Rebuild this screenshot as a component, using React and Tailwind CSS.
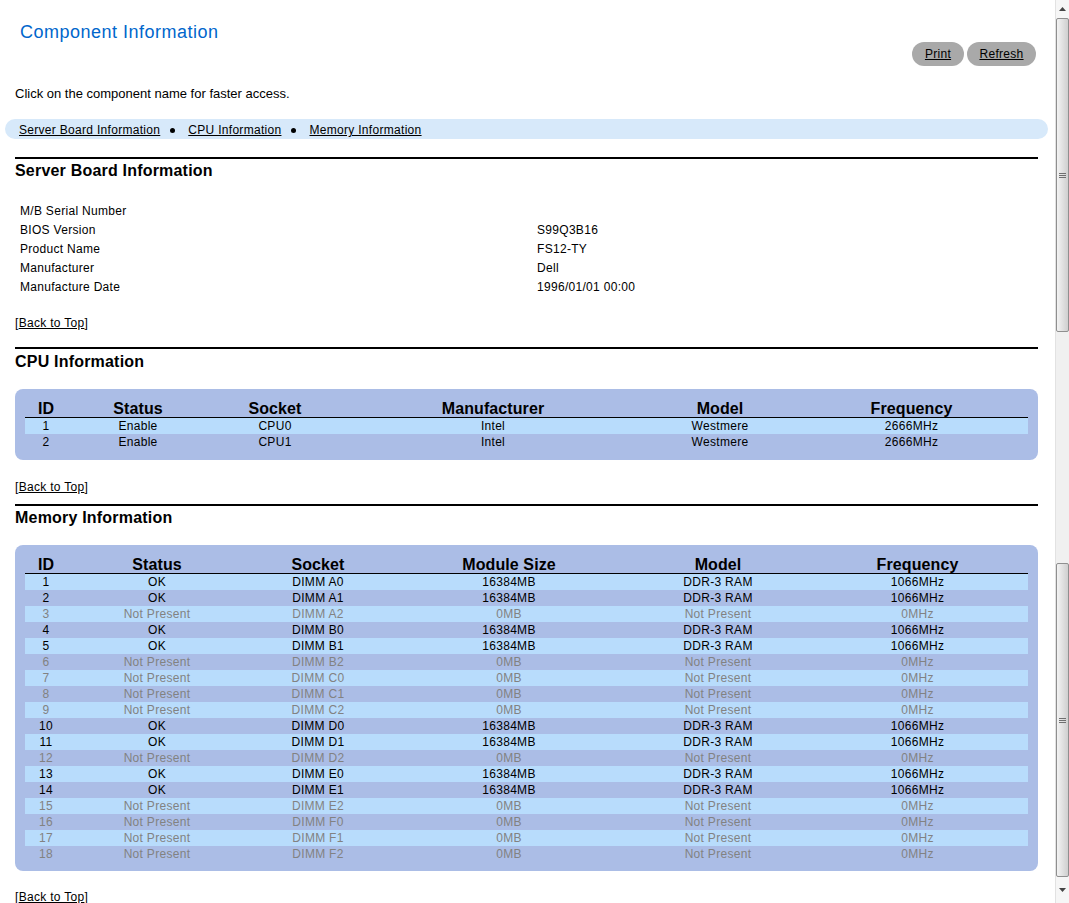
import React from 'react';

const boardInfo = [
  ['M/B Serial Number', ''],
  ['BIOS Version', 'S99Q3B16'],
  ['Product Name', 'FS12-TY'],
  ['Manufacturer', 'Dell'],
  ['Manufacture Date', '1996/01/01 00:00'],
];

const cpus = [
  { id: 1, status: 'Enable', socket: 'CPU0', maker: 'Intel', model: 'Westmere', freq: '2666MHz' },
  { id: 2, status: 'Enable', socket: 'CPU1', maker: 'Intel', model: 'Westmere', freq: '2666MHz' },
];

const slots = ['A0', 'A1', 'A2', 'B0', 'B1', 'B2', 'C0', 'C1', 'C2', 'D0', 'D1', 'D2', 'E0', 'E1', 'E2', 'F0', 'F1', 'F2'];
const populated = ['A0', 'A1', 'B0', 'B1', 'D0', 'D1', 'E0', 'E1'];

const dimms = slots.map((slot, i) => {
  const ok = populated.includes(slot);
  return {
    id: i + 1,
    ok,
    status: ok ? 'OK' : 'Not Present',
    socket: 'DIMM ' + slot,
    size: ok ? '16384MB' : '0MB',
    model: ok ? 'DDR-3 RAM' : 'Not Present',
    freq: ok ? '1066MHz' : '0MHz',
  };
});

function BackToTop({ className }) {
  return (
    <div className={'text-[12px] leading-[14px] tracking-[0.3px] ' + className}>
      [<a href="#top" className="underline text-black">Back to Top</a>]
    </div>
  );
}

function SectionTitle({ children, className, gap }) {
  return (
    <>
      <div className={'h-[2px] bg-black ' + className}></div>
      <h2 className={'text-[16px] leading-[18px] font-bold tracking-[0.2px] text-black ' + gap}>{children}</h2>
    </>
  );
}

function ThumbGrip() {
  return (
    <div className="flex flex-col gap-[1px]">
      <div className="w-[7px] h-[1px] bg-[#6f6f6f]"></div>
      <div className="w-[7px] h-[1px] bg-[#6f6f6f]"></div>
      <div className="w-[7px] h-[1px] bg-[#6f6f6f]"></div>
    </div>
  );
}

function Scrollbar() {
  return (
    <div className="w-[14px] h-full flex flex-col bg-[#f0f0f0] border-l border-[#e2e2e2]">
      <div className="h-[18px] flex items-center justify-center bg-[#f6f6f6]">
        <svg width="7" height="4" viewBox="0 0 7 4"><path d="M3.5 0L7 4H0z" fill="#444" /></svg>
      </div>
      <div className="h-[314px] rounded-[2px] border border-[#8f8f8f] bg-gradient-to-r from-[#f3f3f3] to-[#cfcfcf] flex items-center justify-center">
        <ThumbGrip />
      </div>
      <div className="h-[231px]"></div>
      <div className="h-[314px] rounded-[2px] border border-[#8f8f8f] bg-gradient-to-r from-[#f3f3f3] to-[#cfcfcf] flex items-center justify-center">
        <ThumbGrip />
      </div>
      <div className="flex-1 flex items-center justify-center bg-[#f6f6f6]">
        <svg width="7" height="4" viewBox="0 0 7 4"><path d="M0 0H7L3.5 4z" fill="#444" /></svg>
      </div>
    </div>
  );
}

function HeaderRow({ cols, labels }) {
  return (
    <div className={'grid border-b border-black text-[16px] leading-[18px] font-bold tracking-[0.1px] text-black text-center ' + cols}>
      {labels.map(l => (
        <div key={l} className="h-[18px] pt-[1px] whitespace-nowrap">{l}</div>
      ))}
    </div>
  );
}

function Bullet() {
  return <span className="ml-[10px] mr-[13px] w-[5px] h-[5px] rounded-full bg-black"></span>;
}

export default function App() {
  const cpuCols = 'grid-cols-[42px_142px_132px_304px_150px_233px]';
  const memCols = 'grid-cols-[42px_180px_142px_240px_178px_221px]';

  return (
    <div id="top" className="h-[903px] w-full flex overflow-hidden bg-white font-['Liberation_Sans',Arial,sans-serif] text-black">
      <main className="flex-1 overflow-hidden pl-[15px] pr-[17px]">
        <h1 className="pt-[22px] pl-[5px] text-[18px] leading-[21px] tracking-[0.5px] text-[#0066cc]">Component Information</h1>

        <div className="-mt-[1px] flex justify-end gap-[3px] pr-[2px]">
          <button className="w-[52px] h-[24px] rounded-full bg-[#a9a9a9] text-[12px] tracking-[0.3px] underline text-black">Print</button>
          <button className="w-[69px] h-[24px] rounded-full bg-[#a9a9a9] text-[12px] tracking-[0.3px] underline text-black">Refresh</button>
        </div>

        <p className="mt-[20px] text-[13px] leading-[15px]">Click on the component name for faster access.</p>

        <nav className="mt-[18px] -mx-[10px] h-[20px] rounded-full bg-[#d7e9fa] pl-[14px] pt-[2px] flex items-center text-[12px] tracking-[0.3px]">
          <a href="#board" className="underline">Server Board Information</a>
          <Bullet />
          <a href="#cpu" className="underline">CPU Information</a>
          <Bullet />
          <a href="#memory" className="underline">Memory Information</a>
        </nav>

        <SectionTitle className="mt-[18px]" gap="mt-[3px]">Server Board Information</SectionTitle>
        <div id="board" className="mt-[22px] pl-[5px] text-[12px] tracking-[0.3px]">
          {boardInfo.map(([label, value]) => (
            <div key={label} className="grid grid-cols-[517px_1fr] h-[19px] leading-[19px]">
              <div>{label}</div>
              <div>{value}</div>
            </div>
          ))}
        </div>
        <BackToTop className="mt-[19px]" />

        <SectionTitle className="mt-[17px]" gap="mt-[4px]">CPU Information</SectionTitle>
        <div id="cpu" className="mt-[18px] rounded-[8px] bg-[#abbde6] px-[10px] pt-[10px] pb-[10px]">
          <HeaderRow cols={cpuCols} labels={['ID', 'Status', 'Socket', 'Manufacturer', 'Model', 'Frequency']} />
          {cpus.map((c, i) => (
            <div key={c.id} className={'grid text-center text-[12px] leading-[16px] h-[16px] tracking-[0.3px] ' + cpuCols + (i % 2 === 0 ? ' bg-[#b8dcfc]' : '')}>
              <div>{c.id}</div>
              <div>{c.status}</div>
              <div>{c.socket}</div>
              <div>{c.maker}</div>
              <div>{c.model}</div>
              <div>{c.freq}</div>
            </div>
          ))}
        </div>
        <BackToTop className="mt-[20px]" />

        <SectionTitle className="mt-[10px]" gap="mt-[3px]">Memory Information</SectionTitle>
        <div id="memory" className="mt-[18px] rounded-[8px] bg-[#abbde6] px-[10px] pt-[10px] pb-[9px]">
          <HeaderRow cols={memCols} labels={['ID', 'Status', 'Socket', 'Module Size', 'Model', 'Frequency']} />
          {dimms.map((d, i) => (
            <div
              key={d.id}
              className={'grid text-center text-[12px] leading-[16px] h-[16px] tracking-[0.3px] ' + memCols + (i % 2 === 0 ? ' bg-[#b8dcfc]' : '') + (d.ok ? ' text-black' : ' text-[#828282]')}
            >
              <div>{d.id}</div>
              <div>{d.status}</div>
              <div>{d.socket}</div>
              <div>{d.size}</div>
              <div>{d.model}</div>
              <div>{d.freq}</div>
            </div>
          ))}
        </div>
        <BackToTop className="mt-[19px]" />
      </main>
      <Scrollbar />
    </div>
  );
}
